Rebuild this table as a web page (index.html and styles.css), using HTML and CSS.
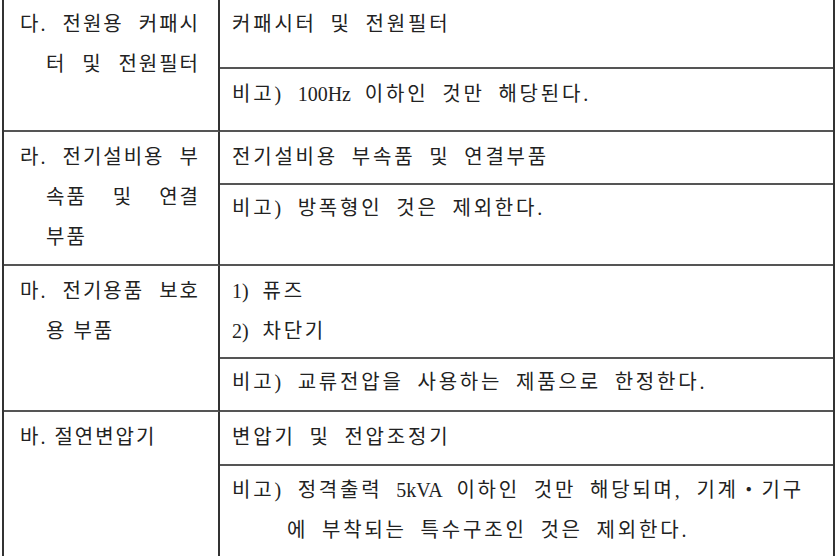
FILE: index.html
```html
<!DOCTYPE html>
<html lang="ko">
<head>
<meta charset="utf-8">
<title>전기용품 목록</title>
<link rel="stylesheet" href="styles.css">
</head>
<body>
<div class="spec">
  <div class="cell head g1">
    <span class="ln jl">다. 전원용 커패시</span>
    <span class="ln jl ind">터 및 전원필터</span>
  </div>
  <div class="cell body first">
    <span class="ln">커패시터 및 전원필터</span>
  </div>
  <div class="cell body">
    <span class="ln">비고) <span class="lat">100Hz</span> 이하인 것만 해당된다.</span>
  </div>

  <div class="cell head g2">
    <span class="ln jl">라. 전기설비용 부</span>
    <span class="ln jl ind">속품 및 연결</span>
    <span class="ln ind">부품</span>
  </div>
  <div class="cell body">
    <span class="ln">전기설비용 부속품 및 연결부품</span>
  </div>
  <div class="cell body note">
    <span class="ln">비고) 방폭형인 것은 제외한다.</span>
  </div>

  <div class="cell head g3">
    <span class="ln jl">마. 전기용품 보호</span>
    <span class="ln ind">용 부품</span>
  </div>
  <div class="cell body">
    <span class="ln"><span class="lat">1)</span> 퓨즈</span>
    <span class="ln"><span class="lat">2)</span> 차단기</span>
  </div>
  <div class="cell body note">
    <span class="ln">비고) 교류전압을 사용하는 제품으로 한정한다.</span>
  </div>

  <div class="cell head g4">
    <span class="ln">바. 절연변압기</span>
  </div>
  <div class="cell body">
    <span class="ln">변압기 및 전압조정기</span>
  </div>
  <div class="cell body last">
    <span class="ln">비고) 정격출력 <span class="lat">5kVA</span> 이하인 것만 해당되며, 기계・기구</span>
    <span class="ln ind2">에 부착되는 특수구조인 것은 제외한다.</span>
  </div>
</div>
</body>
</html>
```

FILE: styles.css
```css
html, body {
  margin: 0;
  padding: 0;
  background: #ffffff;
}

body {
  width: 835px;
  height: 556px;
  overflow: hidden;
  font-family: "Liberation Serif", "Noto Sans CJK KR", serif;
  font-size: 20px;
  color: #222222;
}

.spec {
  box-sizing: border-box;
  margin-left: 2px;
  width: 833px;
  border-left: 2px solid #333333;
  border-right: 2px solid #333333;
  display: grid;
  grid-template-columns: 216px 1fr;
  grid-template-rows: 69px 63px 53px 81px 93px 53px 54px 100px;
}

.cell {
  box-sizing: border-box;
  border-bottom: 2px solid #555555;
  line-height: 40px;
  padding-top: 5px;
}

.head {
  grid-column: 1;
  border-right: 2px solid #333333;
  padding-left: 16px;
  padding-right: 18px;
  letter-spacing: 2px;
}

.g1 { grid-row: 1 / span 2; padding-top: 4px; }
.g2 { grid-row: 3 / span 2; }
.g3 { grid-row: 5 / span 2; }
.g4 { grid-row: 7 / span 2; border-bottom: 0; }

.body {
  grid-column: 2;
  padding-left: 12px;
  letter-spacing: 2.8px;
  word-spacing: 6px;
  white-space: nowrap;
}

.body.first { padding-top: 4px; }
.body.note { padding-top: 3px; }
.body.last { padding-top: 4px; border-bottom: 0; }

.ln {
  display: block;
}

.lat {
  letter-spacing: 0;
}

.jl {
  text-align: justify;
  text-align-last: justify;
}

.ind {
  padding-left: 26px;
}

.ind2 {
  padding-left: 55px;
}
```
